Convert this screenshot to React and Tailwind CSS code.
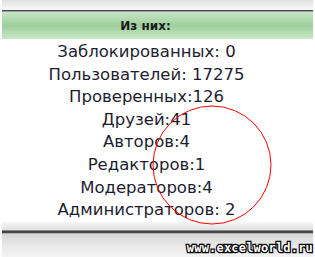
import React from "react";

const rows = [
  "Заблокированных: 0",
  "Пользователей: 17275",
  "Проверенных:126",
  "Друзей:41",
  "Авторов:4",
  "Редакторов:1",
  "Модераторов:4",
  "Администраторов: 2",
];

export default function App() {
  return (
    <div className="relative w-[315px] h-[257px] bg-white overflow-hidden flex flex-col font-['DejaVu_Sans',sans-serif]">
      <div className="mx-[2px] h-[10px] bg-gradient-to-b from-[#e0e0e0] to-[#f9f9f9]" />
      <div className="mx-[2px] h-[1px] bg-[#6a6a6a]" />
      <div className="mx-[2px] h-[1px] bg-[#4a4a4a]" />
      <div className="mx-[2px] h-[1px] bg-[#9a9a9a]" />
      <div className="mx-[2px] h-[28px] bg-gradient-to-b from-[#c6e6c6] via-[#9ccf9c] to-[#c9e9c9] flex items-center justify-center pr-[24px]">
        <span className="text-[12px] font-bold text-[#1a1a1a] leading-none">Из них:</span>
      </div>
      <div className="flex flex-col items-center text-[16.5px] leading-[22.6px] text-[#1d1d30] pt-[2px] pr-[22px]">
        {rows.map((r) => (
          <div key={r} className="whitespace-nowrap">{r}</div>
        ))}
      </div>
      <div className="mt-auto mx-[2px] flex flex-col h-[37px]">
        <div className="h-[8px] bg-gradient-to-b from-[#f8f8f8] to-[#dedede]" />
        <div className="h-[1px] bg-[#8a8a8a]" />
        <div className="h-[2px] bg-[#454545]" />
        <div className="h-[1px] bg-[#b0b0b0]" />
        <div className="flex-1 bg-gradient-to-b from-[#d6d6d6] via-[#e8e8e8] to-[#f4f4f4]" />
      </div>
      <div className="absolute right-[2px] bottom-[3px] text-[12px] font-bold leading-none text-white tracking-[0.2px] [paint-order:stroke_fill] [-webkit-text-stroke:2.5px_#000] font-['DejaVu_Sans_Mono',monospace]">
        www.excelworld.ru
      </div>
      <svg className="absolute left-0 top-0 pointer-events-none" width="315" height="257">
        <circle cx="212" cy="165" r="59" fill="none" stroke="#ff0000" strokeWidth="1" />
      </svg>
    </div>
  );
}
